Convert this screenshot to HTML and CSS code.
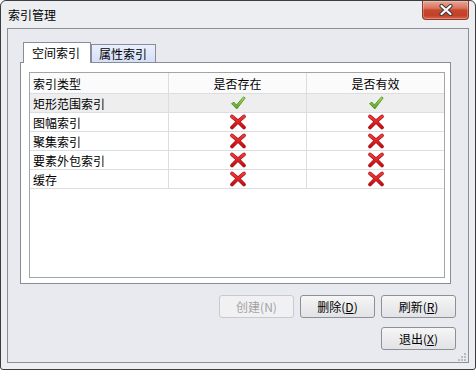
FILE: index.html
```html
<!DOCTYPE html>
<html lang="zh">
<head>
<meta charset="utf-8">
<link rel="stylesheet" href="styles.css">
</head>
<body>
<div class="window">
  <div class="titlebar">
    <span class="title">索引管理</span>
    <button class="close" type="button" aria-label="关闭">
      <svg width="14" height="12" viewBox="0 0 14 12">
        <path d="M2.5 2 L11.5 10 M11.5 2 L2.5 10" stroke="#3b3b3b" stroke-width="4.2" stroke-linecap="round"/>
        <path d="M2.5 2 L11.5 10 M11.5 2 L2.5 10" stroke="#ffffff" stroke-width="2.2" stroke-linecap="round"/>
      </svg>
    </button>
  </div>
  <div class="client">
    <div class="tabs">
      <div class="tab active">空间索引</div>
      <div class="tab">属性索引</div>
    </div>
    <div class="panel">
      <div class="listview">
        <div class="row head">
          <div class="cell left">索引类型</div>
          <div class="cell">是否存在</div>
          <div class="cell">是否有效</div>
        </div>
        <div class="row sel">
          <div class="cell left">矩形范围索引</div>
          <div class="cell"><svg class="ico"><use href="#ok"/></svg></div>
          <div class="cell"><svg class="ico"><use href="#no"/></svg></div>
        </div>
        <div class="row">
          <div class="cell left">图幅索引</div>
          <div class="cell"><svg class="ico"><use href="#x"/></svg></div>
          <div class="cell"><svg class="ico"><use href="#x"/></svg></div>
        </div>
        <div class="row">
          <div class="cell left">聚集索引</div>
          <div class="cell"><svg class="ico"><use href="#x"/></svg></div>
          <div class="cell"><svg class="ico"><use href="#x"/></svg></div>
        </div>
        <div class="row">
          <div class="cell left">要素外包索引</div>
          <div class="cell"><svg class="ico"><use href="#x"/></svg></div>
          <div class="cell"><svg class="ico"><use href="#x"/></svg></div>
        </div>
        <div class="row">
          <div class="cell left">缓存</div>
          <div class="cell"><svg class="ico"><use href="#x"/></svg></div>
          <div class="cell"><svg class="ico"><use href="#x"/></svg></div>
        </div>
      </div>
    </div>
    <div class="buttons">
      <button class="btn" type="button" disabled>创建(N)</button>
      <button class="btn" type="button">删除(<u>D</u>)</button>
      <button class="btn" type="button">刷新(<u>R</u>)</button>
    </div>
    <div class="buttons second">
      <button class="btn" type="button">退出(<u>X</u>)</button>
    </div>
    <svg class="grip" width="8" height="8" viewBox="0 0 8 8">
      <rect x="6" y="0" width="2" height="2" fill="#b9bcc4"/>
      <rect x="3" y="3" width="2" height="2" fill="#b9bcc4"/>
      <rect x="6" y="3" width="2" height="2" fill="#b9bcc4"/>
      <rect x="0" y="6" width="2" height="2" fill="#b9bcc4"/>
      <rect x="3" y="6" width="2" height="2" fill="#b9bcc4"/>
      <rect x="6" y="6" width="2" height="2" fill="#b9bcc4"/>
    </svg>
  </div>
</div>
<svg width="0" height="0" class="defs">
  <defs>
    <linearGradient id="gG" x1="0" y1="0" x2="0" y2="1">
      <stop offset="0" stop-color="#b4e36a"/>
      <stop offset="1" stop-color="#4f9d18"/>
    </linearGradient>
    <linearGradient id="rG" x1="0" y1="0" x2="0" y2="1">
      <stop offset="0" stop-color="#ee3b3b"/>
      <stop offset="1" stop-color="#c40f14"/>
    </linearGradient>
    <symbol id="ok" viewBox="0 0 16 16">
      <path d="M1.5 8.6 L4 7.2 L6.4 10 L13.6 1.8 L15.2 3 L6.8 14 Z" fill="url(#gG)" stroke="#4a8a1a" stroke-width="0.8" stroke-linejoin="round"/>
    </symbol>
    <symbol id="no" viewBox="0 0 16 16">
      <path d="M1.5 8.6 L4 7.2 L6.4 10 L13.6 1.8 L15.2 3 L6.8 14 Z" fill="url(#gG)" stroke="#4a8a1a" stroke-width="0.8" stroke-linejoin="round"/>
    </symbol>
    <symbol id="x" viewBox="0 0 16 16">
      <path d="M2 2.5 Q8 7 14 13.5 M14 2.5 Q8 7 2 13.5" fill="none" stroke="#a80c10" stroke-width="3.6" stroke-linecap="round"/>
      <path d="M2 2.5 Q8 7 14 13.5 M14 2.5 Q8 7 2 13.5" fill="none" stroke="url(#rG)" stroke-width="2.4" stroke-linecap="round"/>
    </symbol>
  </defs>
</svg>
</body>
</html>
```
FILE: styles.css
```css
* { box-sizing: border-box; }
html, body { margin: 0; padding: 0; background: #ffffff; }
body {
  font-family: "Noto Sans CJK SC", "Noto Sans", sans-serif;
  font-size: 12px;
  color: #000;
}
.defs { position: absolute; width: 0; height: 0; }
.window {
  width: 476px;
  height: 370px;
  border: 1px solid #3d3d3d;
  border-radius: 6px 6px 3px 3px;
  background: #eceef2;
  padding: 0 6px 6px 6px;
  display: flex;
  flex-direction: column;
}
.titlebar {
  height: 27px;
  display: flex;
  align-items: flex-start;
  justify-content: space-between;
}
.title {
  padding-left: 1px;
  line-height: 27px;
  height: 27px;
}
.close {
  width: 47px;
  height: 19px;
  margin: 0;
  padding: 0;
  border: 1px solid #8a3a2e;
  border-top: none;
  border-radius: 0 0 4px 4px;
  background: linear-gradient(#e9a795 0%, #d9735f 40%, #c8472f 50%, #c24127 80%, #d7684f 100%);
  display: flex;
  align-items: center;
  justify-content: center;
  box-shadow: inset 0 0 0 1px rgba(255,255,255,0.25);
}
.close svg { display: block; }
.client {
  flex: 1;
  border: 1px solid #8d8f96;
  background: #e9eaef;
  padding: 13px 12px 0 12px;
  display: flex;
  flex-direction: column;
}
.tabs {
  display: flex;
  align-items: flex-end;
  height: 21px;
  margin-left: 3px;
  margin-bottom: -1px;
}
.tab {
  height: 19px;
  line-height: 17px;
  border: 1px solid #898c95;
  border-bottom: none;
  padding: 0 7px;
  background: linear-gradient(#e9effd, #d3defa);
  width: 65px;
}
.tab.active {
  position: relative;
  z-index: 1;
  height: 21px;
  width: 68px;
  background: #ffffff;
  padding: 0 8px;
  line-height: 20px;
  border-radius: 1px 1px 0 0;
}
.panel {
  width: 431px;
  height: 222px;
  border: 1px solid #898c95;
  background: #ffffff;
  padding: 9px 0 0 8px;
}
.listview {
  width: 416px;
  height: 206px;
  border: 1px solid #a3a5ab;
  background: #ffffff;
}
.row {
  display: grid;
  grid-template-columns: 139px 138px 137px;
  height: 19px;
  border-bottom: 1px solid #dcdde0;
}
.row.head { height: 21px; background: #fbfbfb; }
.row.sel { background: #eeeeef; }
.cell {
  border-right: 1px solid #dcdde0;
  display: flex;
  align-items: center;
  justify-content: center;
  line-height: 17px;
}
.cell:last-child { border-right: none; }
.cell.left { justify-content: flex-start; padding-left: 3px; }
.ico { width: 16px; height: 16px; display: block; }
.buttons {
  display: flex;
  justify-content: flex-end;
  gap: 6px;
  margin-top: 11px;
}
.buttons.second { margin-top: 9px; }
.btn {
  width: 75px;
  height: 23px;
  margin: 0;
  padding: 0;
  font: inherit;
  color: #000;
  border: 1px solid #8e9096;
  border-radius: 3px;
  background: linear-gradient(#f6f6f7, #ececee 50%, #e2e3e6 100%);
}
.btn u { text-decoration: underline; text-underline-offset: 1px; }
.btn:disabled {
  color: #a3a3a3;
  border-color: #c9cacd;
  background: #f1f1f3;
}
.grip {
  align-self: flex-end;
  margin-top: auto;
  margin-right: -10px;
  margin-bottom: 1px;
  display: block;
}
```
